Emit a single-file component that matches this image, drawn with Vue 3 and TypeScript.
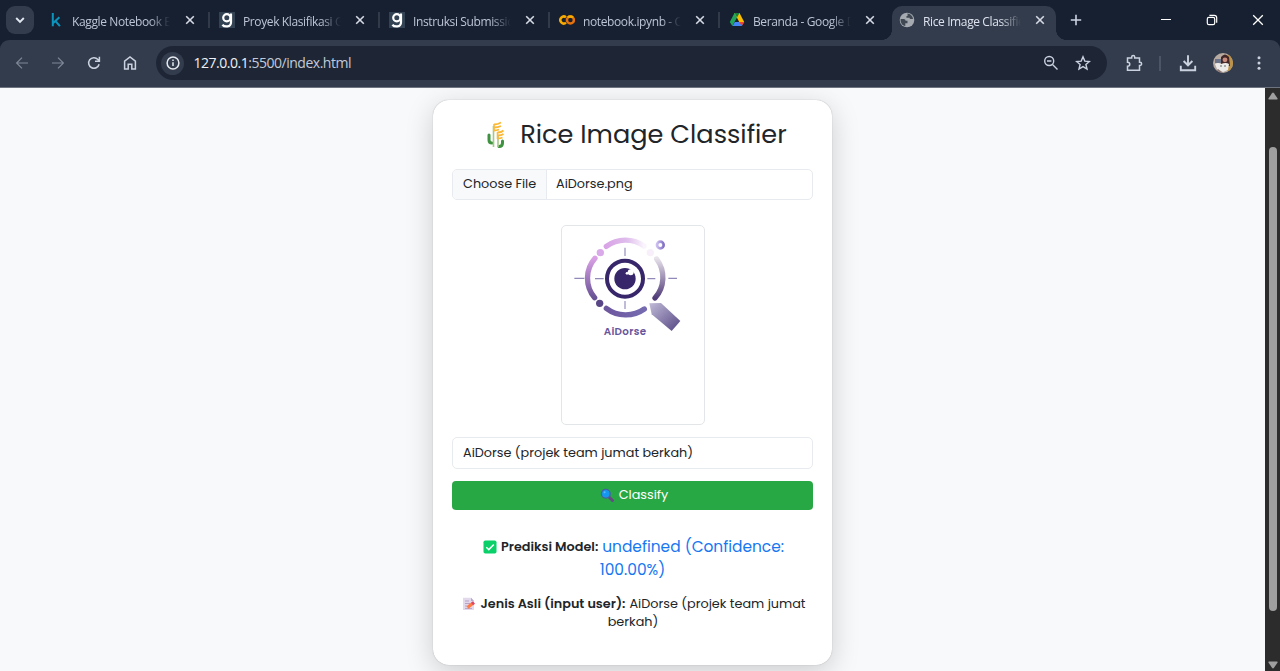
<script setup lang="ts">
import { ref } from 'vue'

type TabIcon = 'kaggle' | 'dicoding' | 'colab' | 'drive' | 'globe'
interface Tab { title: string; icon: TabIcon; active?: boolean }

const tabs: Tab[] = [
  { title: 'Kaggle Notebook E', icon: 'kaggle' },
  { title: 'Proyek Klasifikasi G', icon: 'dicoding' },
  { title: 'Instruksi Submissio', icon: 'dicoding' },
  { title: 'notebook.ipynb - C', icon: 'colab' },
  { title: 'Beranda - Google D', icon: 'drive' },
  { title: 'Rice Image Classifie', icon: 'globe', active: true },
]
const fileName = ref('AiDorse.png')
const label = ref('AiDorse (projek team jumat berkah)')
</script>

<template>
  <div class="window">
    <header class="tabbar">
      <button class="tab-search" aria-label="Search tabs">
        <svg width="12" height="12" viewBox="0 0 12 12"><path d="M2.2 4 6 7.8 9.8 4" fill="none" stroke="#e2e8f2" stroke-width="1.9" /></svg>
      </button>
      <div v-for="(tab, i) in tabs" :key="tab.title" class="tab" :class="{ active: tab.active, first: i === 0 }">
        <svg class="favicon" width="16" height="16" viewBox="0 0 16 16">
          <g v-if="tab.icon === 'kaggle'" fill="none" stroke="#0d94bd" stroke-width="2">
            <path d="M3.8 1v13.2M10.4 5.2 4.2 11M6.3 8.8l4.6 5.4" />
          </g>
          <g v-else-if="tab.icon === 'dicoding'">
            <rect width="16" height="16" fill="#334353" />
            <g fill="none" stroke="#fff" stroke-width="2.2">
              <circle cx="7.8" cy="5.8" r="3.6" />
              <path d="M12 1.4v8.8c0 5.3-6.6 5-8.6 2.5" />
            </g>
          </g>
          <g v-else-if="tab.icon === 'colab'" fill="none" stroke-width="2.5">
            <circle cx="11.4" cy="8" r="3.5" stroke="#e8710a" />
            <path d="M7 5.2a3.5 3.5 0 1 0 0 5.6" stroke="#f9ab00" />
            <path d="M8.9 5.5a3.5 3.5 0 0 1 5 0" stroke="#f9ab00" />
          </g>
          <g v-else-if="tab.icon === 'drive'">
            <path d="M5.5 1h5L8 5.4 3.3 14 .8 10z" fill="#22a45a" />
            <path d="M10.5 1 15.2 10h-5L5.5 1z" fill="#fbbc04" />
            <path d="M5.5 1h5L8 5.4z" fill="#188038" />
            <path d="M3.3 14 5.8 10h9.4l-2.4 4z" fill="#4285f4" />
            <path d="M10.2 10h5l-2.4 4z" fill="#ea4335" />
          </g>
          <g v-else>
            <circle cx="8" cy="8" r="7.3" fill="#a5aab0" />
            <path d="M1.6 7h3.2q1.8 0 1.8 1.7h1.9v2.6H6.3v2.8C3.4 13.6 1.3 10.8 1.6 7zM8.3 1.6c3 .2 5.4 2.5 5.7 5.4h-2.2q-1.3 0-1.3-1.3H7.4V4.3q1.3 0 1.3-1.4z" fill="#404853" />
          </g>
        </svg>
        <span class="tab-title">{{ tab.title }}</span>
        <svg class="close" width="12" height="12" viewBox="0 0 12 12"><path d="m2.2 2.2 7.6 7.6m0-7.6L2.2 9.8" stroke="#d5dae5" stroke-width="1.6" /></svg>
      </div>
      <svg class="new-tab" width="12" height="12" viewBox="0 0 12 12"><path d="M6 .8v10.4M.8 6h10.4" stroke="#cbd3e2" stroke-width="1.6" /></svg>
      <div class="controls">
        <svg width="12" height="12" viewBox="0 0 12 12"><path d="M1 5.5h10" stroke="#fff" stroke-width="1" /></svg>
        <svg width="12" height="12" viewBox="0 0 12 12" fill="none" stroke="#fff" stroke-width="1.2"><rect x="1.3" y="3.3" width="7.4" height="7.4" rx="1.6" /><path d="M3.4 1.3h4.8a2.5 2.5 0 0 1 2.5 2.5v4.9" /></svg>
        <svg width="12" height="12" viewBox="0 0 12 12"><path d="m1.2 1.2 9.6 9.6m0-9.6-9.6 9.6" stroke="#fff" stroke-width="1.3" /></svg>
      </div>
    </header>

    <nav class="toolbar">
      <svg class="nav dim" viewBox="0 0 16 16"><path d="M14 8H2.8M8 2.6 2.6 8 8 13.4" /></svg>
      <svg class="nav dim" viewBox="0 0 16 16"><path d="M2 8h11.2M8 2.6 13.4 8 8 13.4" /></svg>
      <svg class="nav" viewBox="0 0 16 16"><path d="M13.1 9.2A5.3 5.3 0 1 1 11.9 4.4L13 5.6M13.4 1.8v4.4H9" /></svg>
      <svg class="nav" viewBox="0 0 16 16"><path d="M2.6 14V6.2L8 2l5.4 4.2V14H9.8V9.2H6.2V14z" /></svg>
      <div class="address">
        <span class="info">
          <svg width="14" height="14" viewBox="0 0 14 14" fill="none" stroke="#e5e9f0" stroke-width="1.5"><circle cx="7" cy="7" r="5.9" /><path d="M7 6.2V10M7 3.6v1.5" /></svg>
        </span>
        <span class="url"><b>127.0.0.1</b>:5500/index.html</span>
        <svg class="nav zoom" viewBox="0 0 16 16"><circle cx="6.2" cy="6" r="4.5" /><path d="m9.5 9.4 5 5M4 6h4.4" /></svg>
        <svg class="nav star" viewBox="0 0 16 16"><path d="m8 1.8 1.8 4.3 4.6.4-3.5 3 1.1 4.5L8 11.6 4 14l1.1-4.5-3.5-3 4.6-.4z" /></svg>
      </div>
      <svg class="nav puzzle" viewBox="0 0 18 18"><path d="M2.5 4h4.2V2.9a1.5 1.5 0 0 1 3 0V4h4.8v4.2h.5a1.6 1.6 0 0 1 0 3.2h-.5v4.8h-12v-4c3 0 3-4 0-4z" /></svg>
      <i class="divider"></i>
      <svg class="nav download" viewBox="0 0 18 18"><path d="M9 1.2v10M4.6 7 9 11.3 13.4 7M1.8 11.8v4.4h14.4v-4.4" /></svg>
      <svg class="avatar" width="20" height="20" viewBox="0 0 20 20">
        <defs><clipPath id="face"><circle cx="10" cy="10" r="10" /></clipPath></defs>
        <g clip-path="url(#face)">
          <rect width="20" height="20" fill="#b7aaa0" />
          <path d="M15 1h5v17h-6z" fill="#bd9348" />
          <path d="M2 6h6v4H2z" fill="#6b7388" />
          <path d="M8 4q4-5 8 0l1 9H8z" fill="#422729" />
          <circle cx="12" cy="6.8" r="2.4" fill="#c98c7c" />
          <path d="M2 11q3-2 6 0 5-2 8 0l-1 6-5 2-6-3z" fill="#eceae9" />
          <path d="M5 16l5 4H3z" fill="#8a7775" />
          <circle cx="8" cy="13" r=".8" fill="#555" /><circle cx="12" cy="13" r=".8" fill="#555" />
        </g>
      </svg>
      <svg class="menu" width="4" height="16" viewBox="0 0 4 16" fill="#cbd2de"><circle cx="2" cy="2.8" r="1.5" /><circle cx="2" cy="8" r="1.5" /><circle cx="2" cy="13.2" r="1.5" /></svg>
    </nav>

    <div class="viewport">
      <main class="page">
        <section class="card">
          <h1>
            <svg width="26" height="28" viewBox="0 0 26 28">
              <g fill="none" stroke="#3f9340" stroke-width="3" stroke-linecap="round"><path d="M6 14v5q0 3 3 3M19.5 20v2q0 3.5-3.5 3.5" /></g>
              <path d="M10.5 5v21M15 14v12" stroke="#a5c985" stroke-width="1.6" />
              <path d="M11 3v7M14.5 11v7" stroke="#efbd55" stroke-width="1.6" />
              <g fill="none" stroke="#fbb936" stroke-width="1.8"><path d="M11 3.5q4 0 7-2M11 6.5q4 0 7-1.5M11 9.5q3 0 5-1M14.5 11.5q4 0 6-2M14.5 14.5q4 0 6-1.5M14.5 17.5q3 0 5-1" /></g>
            </svg>
            <span>Rice Image Classifier</span>
          </h1>
          <div class="file">
            <span class="choose">Choose File</span><span class="name">{{ fileName }}</span>
          </div>
          <div class="preview">
            <svg width="142" height="198" viewBox="21 18 426 594">
              <defs>
                <linearGradient id="top"><stop offset="0" stop-color="#d9a4e6" /><stop offset=".55" stop-color="#dfbdec" /><stop offset="1" stop-color="#faf5fc" /></linearGradient>
                <linearGradient id="left" gradientUnits="userSpaceOnUse" x1="0" y1="115" x2="0" y2="235"><stop stop-color="#d9a0e5" /><stop offset="1" stop-color="#675294" /></linearGradient>
                <linearGradient id="right" gradientUnits="userSpaceOnUse" x1="0" y1="115" x2="0" y2="235"><stop stop-color="#e7e1ea" /><stop offset="1" stop-color="#503b78" /></linearGradient>
                <linearGradient id="bottom"><stop stop-color="#6d579f" /><stop offset="1" stop-color="#766bb0" /></linearGradient>
                <linearGradient id="handle" x2="1" y2="1"><stop stop-color="#c1bbd7" /><stop offset="1" stop-color="#544583" /></linearGradient>
                <linearGradient id="bubble"><stop stop-color="#cbbdf0" /><stop offset="1" stop-color="#8371c4" /></linearGradient>
              </defs>
              <g fill="none" stroke-width="16" stroke-linecap="round">
                <path d="M154 79A98 98 0 0 1 267 78" stroke="url(#top)" />
                <path d="M120 115A90 90 0 0 0 119 233" stroke="url(#left)" />
                <path d="M154 265A96 96 0 0 0 268 267" stroke="url(#bottom)" />
                <path d="M305 117A92 92 0 0 1 300 234" stroke="url(#right)" />
              </g>
              <circle cx="136" cy="98" r="11" fill="#d9a9e9" /><circle cx="286" cy="98" r="11" fill="#f7f0fa" /><circle cx="134" cy="250" r="11" fill="#594686" />
              <circle cx="316" cy="75" r="10" fill="none" stroke="url(#bubble)" stroke-width="8" />
              <g stroke="#9189b8" stroke-width="3.4"><path d="M58 175h30M120 176h26M277 176h24M340 175h26M210 83v25M210 243v24" /></g>
              <circle cx="210" cy="176" r="54" fill="none" stroke="#38266a" stroke-width="12" />
              <circle cx="210" cy="176" r="32" fill="#38266a" />
              <circle cx="227" cy="157" r="9" fill="#fff" /><circle cx="216" cy="160" r="4" fill="#fff" />
              <path d="m283 250 35-1 58 54-26 30-60-50z" fill="url(#handle)" />
              <text x="146" y="346" textLength="127">AiDorse</text>
            </svg>
          </div>
          <div class="input">{{ label }}</div>
          <button class="classify">
            <svg width="14" height="14" viewBox="0 0 14 14"><path d="m8.5 8.5 4 4" stroke="#684987" stroke-width="3" stroke-linecap="round" /><circle cx="5.8" cy="5.7" r="4.4" fill="#1697ef" stroke="#4561a7" stroke-width="1.3" /><circle cx="4.6" cy="4.2" r="1" fill="#53bdff" /></svg>
            <span>Classify</span>
          </button>
          <div class="prediction">
            <div class="first-line">
              <svg width="14" height="14" viewBox="0 0 14 14"><rect x=".5" y=".5" width="13" height="13" rx="1.8" fill="#09d069" /><path d="m3.3 7.2 2.5 2.4 5-5.2" fill="none" stroke="#fff" stroke-width="1.5" /></svg>
              <strong>Prediksi Model:</strong> <span class="lead">undefined (Confidence:</span>
            </div>
            <div class="lead percent">100.00%)</div>
          </div>
          <div class="actual">
            <div class="first-line">
              <svg width="14" height="14" viewBox="0 0 14 14"><path d="M1 .8h8.2L12 4v9H1z" fill="#e2d9ed" /><path d="M9 .8 12 4H9z" fill="#b8a7ce" /><path d="M3 4h4M3 6.5h5M3 9h2M3 11.4h7" stroke="#b7a2c5" /><path d="m5.5 10.5 5-4" stroke="#ff7c43" stroke-width="3.2" /><path d="m10 7 2-1.6" stroke="#df4563" stroke-width="3.2" /></svg>
              <strong>Jenis Asli (input user):</strong> <span>AiDorse (projek team jumat</span>
            </div>
            <div class="second-line">berkah)</div>
          </div>
        </section>
      </main>
      <aside class="scrollbar">
        <svg width="10" height="8" viewBox="0 0 10 8"><path d="M4 1.2Q5 0 6 1.2L9.6 6.4Q9.8 7.5 9 7.5H1Q.2 7.5.4 6.4z" /></svg>
        <div class="track"><div class="thumb"></div></div>
        <svg width="10" height="8" viewBox="0 0 10 8"><path d="M4 6.8Q5 8 6 6.8L9.6 1.6Q9.8.5 9 .5H1Q.2.5.4 1.6z" /></svg>
      </aside>
    </div>
  </div>
</template>

<style>
body { margin: 0; overflow: hidden; }
</style>

<style scoped>
* { box-sizing: border-box; }
svg { display: block; flex: none; }
button { border: 0; padding: 0; }
.window { width: 1280px; height: 671px; display: flex; flex-direction: column; overflow: hidden; background: #172030; font-family: "Open Sans", sans-serif; }
.tabbar { height: 40px; display: flex; align-items: center; padding-left: 6px; flex: none; }
.tab-search { width: 28px; height: 28px; border-radius: 9px; background: #333c4c; display: grid; place-items: center; margin-right: 4px; }
.tab { position: relative; width: 170px; height: 34px; display: flex; align-items: center; padding-left: 11px; color: #bcc5d6; }
.tab::before { content: ""; position: absolute; left: 0; top: 9px; width: 2px; height: 16px; background: #303a49; }
.tab.first::before { display: none; }
.tab.first .tab-title { margin-left: 7px; margin-right: 1px; }
.tab-title { width: 102px; margin-left: 8px; white-space: nowrap; font-size: 12px; line-height: 18px; letter-spacing: -0.38px; padding-top: 3px; mask-image: linear-gradient(90deg, #000 76%, transparent 96%); }
.close { margin-left: 8.5px; }
.tab.active { width: 164px; height: 34px; margin: 6px 0 0 4px; padding: 0 0 6px 7px; background: #333c4c; border-radius: 10px 10px 0 0; color: #dde3ee; }
.tab.active .close { margin-left: 9px; }
.tab.active::before, .tab.active::after { content: ""; position: absolute; top: auto; bottom: 0; width: 10px; height: 10px; }
.tab.active::before { left: -10px; background: radial-gradient(circle at 0 0, transparent 9.6px, #333c4c 10px); }
.tab.active::after { right: -10px; background: radial-gradient(circle at 100% 0, transparent 9.6px, #333c4c 10px); }
.new-tab { margin-left: 14px; }
.controls { margin-left: auto; display: flex; gap: 34px; padding-right: 16px; }
.toolbar { height: 47px; flex: none; display: flex; align-items: center; background: #333c4c; border-radius: 9px 9px 0 0; padding: 0 0 1px 14px; }
.nav { width: 16px; height: 16px; margin-right: 20px; fill: none; stroke: #cbd2df; stroke-width: 1.5; }
.nav.dim { stroke: #7e8797; stroke-width: 1.2; }
.address { width: 951px; height: 34px; border-radius: 17px; background: #1e2636; display: flex; align-items: center; margin-left: -2px; padding-left: 5px; }
.info { width: 23px; height: 23px; border-radius: 50%; background: #333c4c; display: grid; place-items: center; }
.url { margin-left: 9.5px; padding-bottom: 1px; font-size: 14px; letter-spacing: -0.48px; color: #c3cad6; flex: 1; white-space: nowrap; }
.url b { font-weight: 400; color: #edf1f6; }
.nav.zoom { margin-right: 16px; stroke-width: 1.4; }
.nav.star { margin-right: 16px; stroke-width: 1.4; }
.nav.puzzle { width: 18px; height: 18px; margin: 0 16px 0 18px; }
.divider { width: 2px; height: 15px; background: #4b5567; margin-right: 18px; }
.nav.download { width: 18px; height: 18px; margin-right: 16px; stroke-width: 1.9; }
.menu { margin-left: 24px; }
.viewport { flex: 1; min-height: 0; display: flex; border-top: 1px solid #6e7580; }
.page { flex: 1; background: #f8f9fb; overflow: hidden; display: flex; justify-content: center; align-items: flex-start; padding-top: 12px; }
.card { width: 399px; height: 565px; border-radius: 16px; background: #fff; padding: 16px 19px; box-shadow: 0 7px 28px rgba(0, 0, 0, .18), 0 0 1px rgba(0, 0, 0, .35); display: flex; flex-direction: column; font-family: Poppins, sans-serif; color: #212529; font-size: 12.8px; white-space: nowrap; }
h1 { display: flex; align-items: center; justify-content: center; gap: 11px; height: 37px; margin: 0 0 16px; padding-left: 5px; font-size: 25.6px; font-weight: 400; }
.file { height: 31px; display: flex; border: 1px solid #e7eaee; border-radius: 5px; overflow: hidden; line-height: 28px; flex: none; }
.choose { width: 94px; padding-left: 10px; background: #f8f9fb; border-right: 1px solid #e7eaee; }
.name { padding-left: 9px; }
.preview { width: 144px; height: 200px; margin: 25px auto 12px; border: 1px solid #e3e6e9; border-radius: 5px; flex: none; }
.preview text { font: 600 31px Poppins, sans-serif; fill: #68549c; }
.input { height: 32px; border: 1px solid #e7eaee; border-radius: 5px; padding-left: 10px; line-height: 29px; flex: none; }
.classify { height: 29px; margin-top: 12px; border-radius: 4px; background: #28a745; color: #fff; display: flex; align-items: center; justify-content: center; gap: 5px; padding: 0 0 2px 3px; font: inherit; flex: none; }
.prediction { margin-top: 25px; }
.prediction > div, .actual > div { display: flex; align-items: center; justify-content: center; gap: 4px; height: 23px; }
.prediction > .first-line { padding-left: 2px; }
.actual > .first-line { padding-left: 3px; }
.actual > .second-line { padding-left: 1px; }
strong { font-weight: 600; }
.lead { font-size: 15.4px; color: #1677f2; }
.actual { margin-top: 14px; }
.actual > div { height: 18px; }
.scrollbar { width: 15px; background: #2c2c2c; display: flex; flex-direction: column; align-items: center; padding: 4px 0 2px; fill: #9f9f9f; }
.track { flex: 1; width: 8px; padding-top: 47px; }
.thumb { height: 464px; border-radius: 4px; background: #9f9f9f; }
</style>
